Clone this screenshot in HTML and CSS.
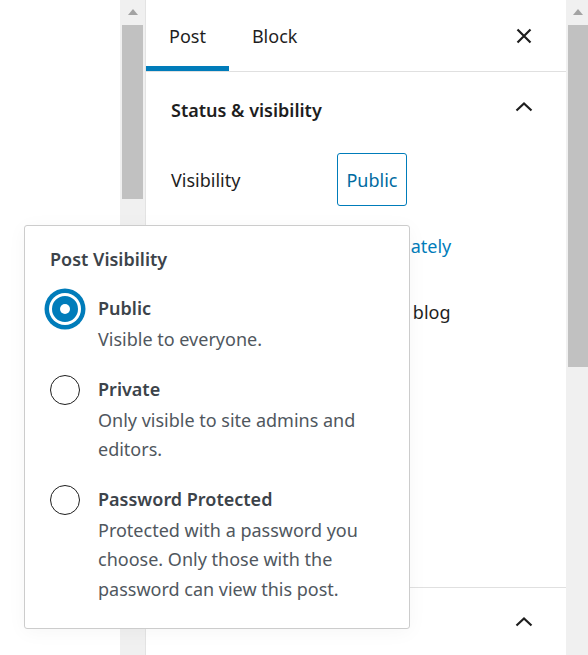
FILE: index.html
```html
<!DOCTYPE html>
<html>
<head>
<meta charset="utf-8">
<link rel="stylesheet" href="styles.css">
</head>
<body>
<div class="app">
  <div class="canvas"></div>
  <div class="scroll scroll-left">
    <div class="arrow"></div>
    <div class="thumb thumb-left"></div>
  </div>
  <div class="sidebar">
    <div class="tabs">
      <div class="tab active">Post</div>
      <div class="tab">Block</div>
      <div class="close">
        <svg width="24" height="24" viewBox="0 0 24 24"><path d="M5.5 5.5l13 13M18.5 5.5l-13 13" stroke="#1e1e1e" stroke-width="2.2" fill="none"/></svg>
      </div>
    </div>
    <div class="panel">
      <div class="panel-head">
        <span class="panel-title">Status &amp; visibility</span>
        <svg class="chev" width="24" height="24" viewBox="0 0 24 24"><path d="M4.5 12.5l7.5-7 7.5 7" stroke="#1e1e1e" stroke-width="2.2" fill="none"/></svg>
      </div>
      <div class="row row-vis">
        <span class="row-label">Visibility</span>
        <button class="vis-btn">Public</button>
      </div>
      <div class="row row-pub">
        <span class="row-label">Publish</span>
        <span class="link">Immediately</span>
      </div>
      <div class="row row-stick">
        <span class="checkbox"></span>
        <span class="stick-label">Stick to the top of the blog</span>
      </div>
    </div>
    <div class="panel panel-2">
      <div class="panel-head">
        <span class="panel-title">Permalink</span>
        <svg class="chev" width="24" height="24" viewBox="0 0 24 24"><path d="M4.5 12.5l7.5-7 7.5 7" stroke="#1e1e1e" stroke-width="2.2" fill="none"/></svg>
      </div>
    </div>
  </div>
  <div class="scroll scroll-right">
    <div class="arrow"></div>
    <div class="thumb thumb-right"></div>
  </div>

  <div class="popover">
    <div class="pop-title">Post Visibility</div>
    <div class="opt">
      <span class="radio checked"></span>
      <div class="opt-text">
        <div class="opt-label">Public</div>
        <div class="opt-desc">Visible to everyone.</div>
      </div>
    </div>
    <div class="opt">
      <span class="radio"></span>
      <div class="opt-text">
        <div class="opt-label">Private</div>
        <div class="opt-desc">Only visible to site admins and editors.</div>
      </div>
    </div>
    <div class="opt">
      <span class="radio"></span>
      <div class="opt-text">
        <div class="opt-label">Password Protected</div>
        <div class="opt-desc">Protected with a password you choose. Only those with the password can view this post.</div>
      </div>
    </div>
  </div>
</div>
</body>
</html>
```

FILE: styles.css
```css
* { box-sizing: border-box; }
html, body { margin: 0; padding: 0; }
body {
  font-family: "Noto Sans", "Open Sans", sans-serif;
  font-size: 18px;
  color: #1e1e1e;
  background: #fff;
  overflow: hidden;
}
.app {
  position: relative;
  display: flex;
  width: 588px;
  height: 655px;
  overflow: hidden;
}
.canvas { width: 120px; flex: none; background: #fff; }
.scroll {
  position: relative;
  flex: none;
  background: #f0f0f0;
}
.scroll-left { width: 26px; border-right: 1px solid #e3e3e3; }
.scroll-right { width: 22px; }
.arrow {
  position: absolute;
  top: 9px;
  left: 50%;
  margin-left: -5px;
  width: 0; height: 0;
  border-left: 5px solid transparent;
  border-right: 5px solid transparent;
  border-bottom: 6px solid #a3a3a3;
}
.scroll-right .arrow { margin-left: -4px; }
.thumb { position: absolute; background: #c1c1c1; top: 25px; }
.thumb-left { left: 2px; width: 21px; height: 174px; }
.thumb-right { left: 2px; width: 20px; height: 342px; }

.sidebar { width: 420px; flex: none; background: #fff; }
.tabs {
  display: flex;
  align-items: stretch;
  height: 72px;
  border-bottom: 1px solid #e0e0e0;
}
.tab {
  display: flex;
  align-items: center;
  padding: 0 23px;
  font-size: 18px;
  color: #1e1e1e;
  border-bottom: 5px solid transparent;
  padding-top: 5px;
}
.tab.active { border-bottom-color: #007cba; }
.close { margin-left: auto; margin-right: 30px; display: flex; align-items: center; }

.panel { border-bottom: 1px solid #e0e0e0; padding: 0 24px 0 25px; height: 516px; }
.panel-head {
  display: flex;
  align-items: center;
  justify-content: space-between;
  height: 76px;
  padding-right: 6px;
}
.panel-title { font-weight: 600; font-size: 18px; }
.row { display: flex; align-items: center; }
.row-vis { height: 53px; margin-top: 5px; }
.row-label { width: 166px; font-size: 18px; }
.vis-btn {
  font-family: inherit;
  font-size: 18px;
  color: #006ba1;
  background: #fff;
  border: 1px solid #007cba;
  border-radius: 3px;
  height: 53px;
  width: 70px;
  padding: 0;
}
.row-pub { height: 80px; }
.link { color: #007cba; padding-left: 8px; }
.row-stick { height: 52px; }
.checkbox {
  width: 24px; height: 24px;
  border: 1px solid #757575;
  border-radius: 2px;
  margin-right: 32px;
}
.stick-label { font-size: 18px; }

.panel-2 { border-bottom: none; height: auto; }
.panel-2 .panel-head { height: 74px; }
.panel-2 .panel-title { visibility: hidden; }

.popover {
  position: absolute;
  left: 24px;
  top: 225px;
  width: 386px;
  height: 404px;
  background: #fff;
  border: 1px solid #cccccc;
  border-radius: 3px;
  box-shadow: 0 3px 20px rgba(0,0,0,0.04);
  padding: 20px 20px 0 25px;
  color: #3c434a;
}
.pop-title { font-weight: 600; font-size: 18px; line-height: 26px; margin-bottom: 21px; }
.opt { display: flex; align-items: flex-start; margin-bottom: 19px; }
.radio {
  flex: none;
  width: 30px;
  height: 30px;
  border-radius: 50%;
  border: 1px solid #1e1e1e;
  margin-top: 1px;
  margin-right: 18px;
  position: relative;
}
.radio.checked {
  border: 2px solid #fff;
  background: #007cba;
  box-shadow: 0 0 0 1px #fff, 0 0 0 5.5px #007cba;
}
.radio.checked::after {
  content: "";
  position: absolute;
  left: 50%; top: 50%;
  width: 10px; height: 10px;
  margin: -5px 0 0 -5px;
  border-radius: 50%;
  background: #fff;
}
.opt-text { width: 275px; }
.opt-label { font-weight: 600; font-size: 18px; line-height: 30px; }
.opt-desc { font-size: 18px; line-height: 29.5px; color: #50575e; margin-top: 2px; }
```
